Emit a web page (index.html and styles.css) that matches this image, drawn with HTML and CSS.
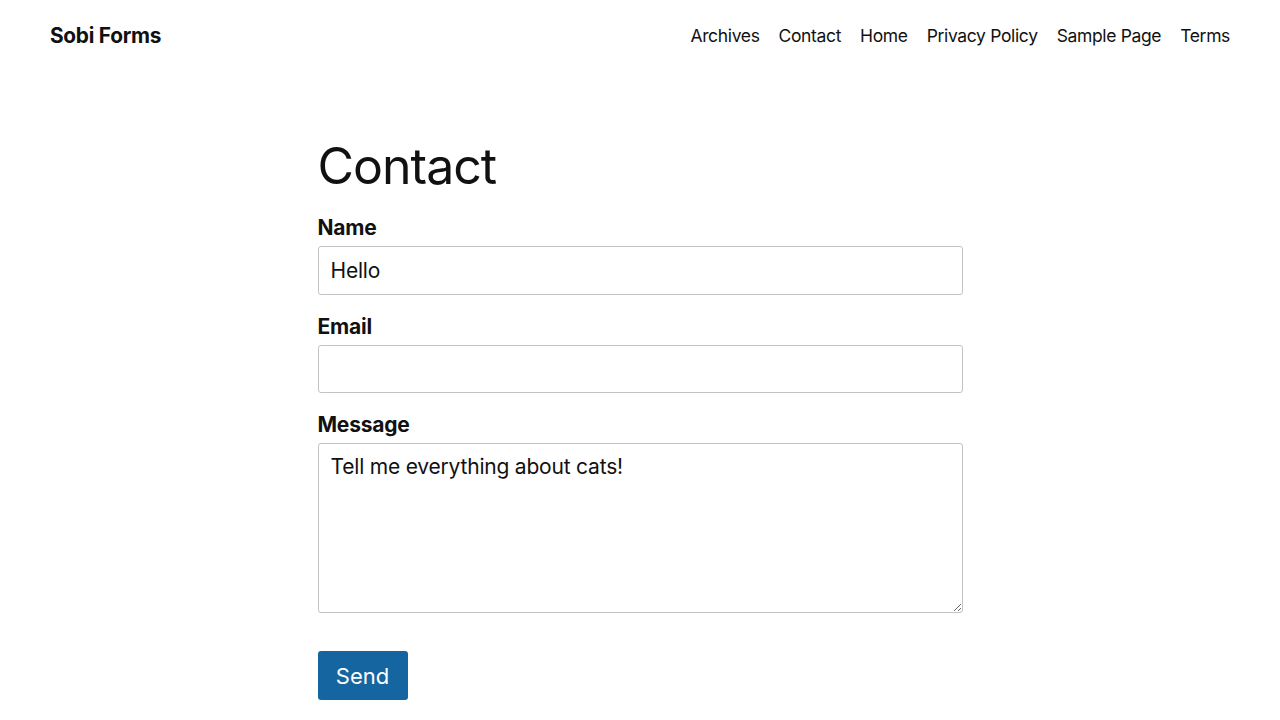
FILE: index.html
```html
<!DOCTYPE html>
<html lang="en">
<head>
<meta charset="utf-8">
<title>Contact – Sobi Forms</title>
<link rel="stylesheet" href="styles.css">
</head>
<body>
<header class="site-header">
  <a class="site-title" href="#">Sobi Forms</a>
  <nav class="site-nav">
    <a href="#">Archives</a>
    <a href="#">Contact</a>
    <a href="#">Home</a>
    <a href="#">Privacy Policy</a>
    <a href="#">Sample Page</a>
    <a href="#">Terms</a>
  </nav>
</header>
<main class="content">
  <h1 class="page-title">Contact</h1>
  <form class="contact-form">
    <div class="field">
      <label for="name">Name</label>
      <input id="name" type="text" value="Hello">
    </div>
    <div class="field">
      <label for="email">Email</label>
      <input id="email" class="input-short" type="email" value="">
    </div>
    <div class="field field-last">
      <label for="message">Message</label>
      <textarea id="message">Tell me everything about cats!</textarea>
    </div>
    <button type="submit" class="send">Send</button>
  </form>
</main>
</body>
</html>
```
FILE: styles.css
```css
* { box-sizing: border-box; }
html, body { margin: 0; padding: 0; background: #fff; }
body {
  font-family: Inter, "Noto Sans", sans-serif;
  color: #111;
}
.site-header {
  display: flex;
  justify-content: space-between;
  align-items: center;
  height: 70px;
  padding: 0 50px;
}
.site-title {
  font-size: 20.8px;
  font-weight: 700;
  color: #111;
  text-decoration: none;
  letter-spacing: -0.25px;
}
.site-nav {
  display: flex;
  gap: 19px;
}
.site-nav a {
  font-size: 17.5px;
  font-weight: 400;
  color: #111;
  text-decoration: none;
  letter-spacing: -0.35px;
}
.content {
  width: 645px;
  margin: 0 auto;
  padding-top: 66px;
}
.page-title {
  font-size: 50px;
  font-weight: 400;
  margin: 0 0 18px;
  line-height: 1.2;
  letter-spacing: -1px;
}
.field { margin-bottom: 18px; }
.field label {
  display: block;
  font-size: 21px;
  font-weight: 700;
  line-height: 28px;
  margin-bottom: 4px;
  letter-spacing: -0.2px;
}
.field input, .field textarea {
  display: block;
  width: 100%;
  font-family: inherit;
  font-size: 21px;
  color: #111;
  border: 1px solid #c3c3c3;
  border-radius: 3px;
  padding: 0 12px;
  height: 49px;
  background: #fff;
  letter-spacing: -0.2px;
}
.field .input-short { height: 48px; }
.field textarea {
  height: 170px;
  padding: 9px 12px;
  resize: vertical;
  line-height: 1.3;
}
.field-last { margin-bottom: 38px; }
.send {
  font-family: inherit;
  font-size: 22px;
  color: #fff;
  background: #1565a0;
  border: none;
  border-radius: 3px;
  width: 90px;
  height: 49px;
  padding: 0;
}
```
